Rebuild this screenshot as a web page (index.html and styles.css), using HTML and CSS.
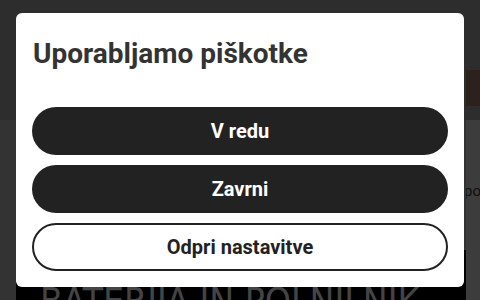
FILE: index.html
```html
<!DOCTYPE html>
<html lang="sl">
<head>
    <meta charset="UTF-8" />
    <meta name="viewport" content="width=device-width, initial-scale=1.0" />
    <title>Piškotki</title>
    <link rel="stylesheet" href="styles.css">
</head>
<body>
    <div class="page">
        <header class="site-header">
            <span class="header-btn"></span>
        </header>
        <section class="content">
            <div class="content-main">
                <div class="banner">BATERIJA IN POLNILNIK</div>
            </div>
            <aside class="content-side">poh</aside>
        </section>
    </div>

    <div class="overlay">
        <div class="modal" role="dialog" aria-labelledby="cookieTitle">
            <h1 id="cookieTitle">Uporabljamo piškotke</h1>
            <div class="actions">
                <button class="btn btn-dark">V redu</button>
                <button class="btn btn-dark">Zavrni</button>
                <button class="btn btn-outline">Odpri nastavitve</button>
            </div>
        </div>
    </div>
</body>
</html>
```

FILE: styles.css
```css
body {
    margin: 0;
    font-family: Roboto, "Liberation Sans", sans-serif;
    background: #555;
    width: 480px;
    height: 300px;
    overflow: hidden;
    position: relative;
}
.page {
    height: 300px;
    display: flex;
    flex-direction: column;
}
.site-header {
    height: 120px;
    background: #5a5a5a;
    display: flex;
    justify-content: flex-end;
    align-items: flex-start;
}
.header-btn {
    width: 14px;
    height: 36px;
    margin-top: 70px;
    background: #5a4536;
}
.content {
    flex: 1;
    display: flex;
    background: #666;
}
.content-main {
    flex: 1;
    display: flex;
    flex-direction: column;
    justify-content: flex-end;
    padding: 0 0 0 16px;
}
.banner {
    height: 50px;
    background: #000;
    color: #888;
    font-family: "Liberation Sans Narrow", "DejaVu Sans Condensed", sans-serif;
    font-size: 37px;
    letter-spacing: 0;
    padding: 33px 0 0 24px;
    box-sizing: border-box;
    white-space: nowrap;
    overflow: hidden;
    line-height: 1;
}
.content-side {
    width: 14px;
    background: #787878;
    color: #222;
    font-size: 15px;
    padding-top: 62px;
    overflow: hidden;
    white-space: nowrap;
    text-indent: -2px;
}
.overlay {
    position: absolute;
    inset: 0;
    background: rgba(0, 0, 0, 0.5);
    display: flex;
    justify-content: center;
    align-items: flex-start;
    padding-top: 13px;
}
.modal {
    width: 448px;
    height: 274px;
    box-sizing: border-box;
    background: #fff;
    border-radius: 6px;
    padding: 24px 16px 0;
}
h1 {
    margin: 0 0 0 1px;
    font-size: 28px;
    font-weight: 700;
    color: #333;
    line-height: 34px;
}
.actions {
    margin-top: 36px;
    display: flex;
    flex-direction: column;
    gap: 10px;
}
.btn {
    height: 48px;
    border-radius: 24px;
    font-family: Roboto, "Liberation Sans", sans-serif;
    font-size: 20px;
    font-weight: 700;
    cursor: pointer;
}
.btn-dark {
    background: #222;
    color: #fff;
    border: none;
}
.btn-outline {
    background: #fff;
    color: #222;
    border: 2px solid #222;
}
```
